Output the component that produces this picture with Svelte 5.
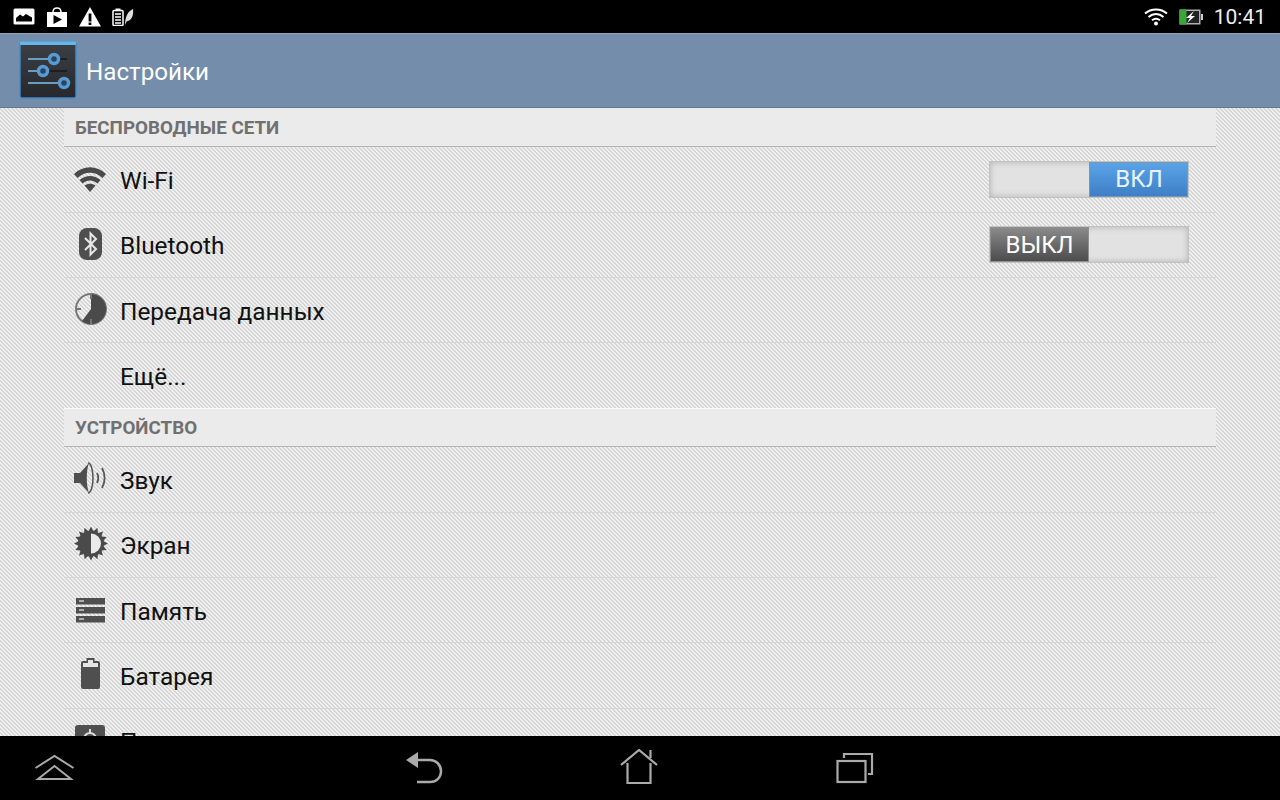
<script>
  const wireless = [
    { id: 'wifi', label: 'Wi-Fi', toggle: 'on' },
    { id: 'bt', label: 'Bluetooth', toggle: 'off' },
    { id: 'data', label: 'Передача данных' },
    { id: '', label: 'Ещё...' }
  ];
  const device = [
    { id: 'sound', label: 'Звук' },
    { id: 'screen', label: 'Экран' },
    { id: 'storage', label: 'Память' },
    { id: 'battery', label: 'Батарея' },
    { id: 'apps', label: 'Приложения' }
  ];
  const sunTeeth = Array.from({ length: 16 }, (_, i) => i * 22.5);
</script>

{#snippet rowIcon(id)}
  <svg class="row-icon" viewBox="0 0 36 36" aria-hidden="true">
    {#if id === 'wifi'}
      <g transform="translate(0 2)" fill="#4a4a4a">
        <path d="M2 11 C11 2 25 2 34 11 L30.5 15 C23 8 13 8 5.5 15Z"/>
        <path d="M7.5 17 C14 11.5 22 11.5 28.5 17 L25.5 20.5 C20.5 16.5 15.5 16.5 10.5 20.5Z"/>
        <path d="M12.5 22.5 C16 20 20 20 23.5 22.5 L18 29Z"/>
      </g>
    {:else if id === 'bt'}
      <rect x="7" y="1" width="23" height="32" rx="8" fill="#4f4f4f"/>
      <path d="M13 11 L24 22 L18.5 27.5 V6.5 L24 12 L13 23" fill="none" stroke="#e8e8e8" stroke-width="2"/>
    {:else if id === 'data'}
      <g transform="translate(1 -1)">
        <circle cx="18" cy="18" r="15" fill="none" stroke="#777" stroke-width="2"/>
        <path d="M18 3 A15 15 0 1 1 9 30 L18 18Z" fill="#4a4a4a"/>
        <path d="M18 28 V33 M3 18 H8 M18 3 V8" stroke="#777" stroke-width="2"/>
      </g>
    {:else if id === 'sound'}
      <g transform="translate(0 -1)">
        <path d="M2 13 H8 L17 3 C14 10 14 26 17 33 L8 23 H2Z" fill="#4f4f4f"/>
        <path d="M16 3 C19 3 21 10 21 18 C21 26 19 33 16 33" fill="none" stroke="#555" stroke-width="1.5"/>
        <path d="M25 13 C26.5 16 26.5 20 25 23 M30 8 C33.5 14 33.5 22 30 28" fill="none" stroke="#555" stroke-width="1.8"/>
      </g>
    {:else if id === 'screen'}
      <g transform="translate(1 -1.5)">
        {#each sunTeeth as a}
          <path d="M15.5 6 L18 1 L20.5 6Z" fill="#4a4a4a" transform="rotate({a} 18 18)"/>
        {/each}
        <circle cx="18" cy="18" r="13" fill="#4a4a4a"/>
        <path d="M18 8 A10 10 0 0 1 18 28Z" fill="#eaeaea"/>
      </g>
    {:else if id === 'storage'}
      <rect x="4" y="6" width="29" height="6.5" fill="#4f4f4f"/>
      <rect x="4" y="15" width="29" height="6.5" fill="#4f4f4f"/>
      <rect x="4" y="24" width="29" height="6.5" fill="#4f4f4f"/>
      <path d="M7 9 H12 M7 18 H12 M7 27 H12" stroke="#ccc" stroke-width="1.6"/>
    {:else if id === 'battery'}
      <path d="M9 6 Q9 4 11 4 H14.5 V1 H22.5 V4 H26 Q28 4 28 6 V30 Q28 32 26 32 H11 Q9 32 9 30Z" fill="#4f4f4f"/>
      <path d="M11 6 H16 V3 H21 V6 H26 V10 H11Z" fill="#e4e4e4"/>
    {:else if id === 'apps'}
      <rect x="3" y="2" width="30" height="32" rx="3" fill="#4f4f4f"/>
      <circle cx="18" cy="16" r="6" fill="none" stroke="#ddd" stroke-width="2"/>
      <path d="M18 6 V10 M18 22 V26 M8 16 H12 M24 16 H28" stroke="#ddd" stroke-width="2"/>
    {/if}
  </svg>
{/snippet}

{#snippet row(item)}
  <div class="row">
    <div class="icon-slot">
      {#if item.id}{@render rowIcon(item.id)}{/if}
    </div>
    <span class="label">{item.label}</span>
    {#if item.toggle === 'on'}
      <div class="switch"><span class="blank"></span><span class="thumb on">ВКЛ</span></div>
    {:else if item.toggle === 'off'}
      <div class="switch"><span class="thumb off">ВЫКЛ</span><span class="blank"></span></div>
    {/if}
  </div>
{/snippet}

<div class="screen">
  <header class="status">
    <div class="status-left">
      <svg width="22" height="17" viewBox="0 0 22 17"><rect x="0.5" y="0.5" width="21" height="16" rx="1.5" fill="#fff"/><path d="M3 13.5 V10 L7 6.5 L10 8.5 L13 6 L19 9.5 V13.5Z" fill="#000"/></svg>
      <svg width="22" height="22" viewBox="0 0 22 22"><path d="M1 6 H21 V21 H1Z" fill="#fff"/><path d="M7 6 C7 0.5 15 0.5 15 6" fill="none" stroke="#fff" stroke-width="1.5"/><path d="M7.5 9 L16 13.5 L7.5 18Z" fill="#000"/></svg>
      <svg width="22" height="20" viewBox="0 0 22 20"><path d="M11 0 L22 19.5 H0Z" fill="#fff"/><rect x="9.6" y="6.5" width="2.8" height="8" fill="#000"/><rect x="9.6" y="15.5" width="2.8" height="2.5" fill="#000"/></svg>
      <svg width="22" height="18" viewBox="0 0 22 18"><rect x="1" y="2.5" width="10" height="15" rx="1" fill="none" stroke="#fff" stroke-width="1.5"/><rect x="3.5" y="0.5" width="5" height="2" fill="#fff"/><path d="M3 6 H9 M3 9 H9 M3 12 H9 M3 15 H9" stroke="#fff" stroke-width="1.5"/><path d="M13 17 C13 9 16 3 21 1 C22 8 19 13 14.5 13.5Z" fill="#ddd"/></svg>
    </div>
    <div class="status-right">
      <svg width="24" height="19" viewBox="0 0 24 19"><g fill="none" stroke="#fff" stroke-width="2"><path d="M1 6.5 C7 1 17 1 23 6.5"/><path d="M4.5 10 C9 6 15 6 19.5 10"/><path d="M8 13.2 C10.5 11.3 13.5 11.3 16 13.2"/></g><circle cx="12" cy="16.5" r="2" fill="#fff"/></svg>
      <svg class="batt" width="24" height="16" viewBox="0 0 24 16"><rect x="0.5" y="0.5" width="21" height="15" fill="#b0b0b0"/><rect x="2" y="2" width="18" height="12" fill="#222"/><rect x="0.5" y="0.5" width="7" height="15" fill="#3aa63a"/><rect x="22" y="5" width="2" height="6" fill="#ccc"/><path d="M15 2 L7 9 H11 L8 14 L16 7 H12Z" fill="#fff"/></svg>
      <span class="clock">10:41</span>
    </div>
  </header>

  <div class="actionbar">
    <svg class="app-icon" width="58" height="58" viewBox="0 0 58 58">
      <defs>
        <linearGradient id="appbg" x1="0" y1="0" x2="0" y2="1">
          <stop offset="0" stop-color="#3c4045"/>
          <stop offset="1" stop-color="#26282b"/>
        </linearGradient>
      </defs>
      <rect x="1" y="1" width="56" height="56" rx="2" fill="url(#appbg)" stroke="#3f8ccb" stroke-width="1.5"/>
      <rect x="1" y="0.5" width="56" height="3.5" rx="1" fill="#62b8ee"/>
      <path d="M9 18 H35 M9 30 H24 M9 42 H45" stroke="#6d9cc2" stroke-width="2"/>
      <path d="M38 18 H48 M28 30 H48" stroke="#16181a" stroke-width="1.5"/>
      <circle cx="35" cy="18" r="4.5" fill="#27455f" stroke="#5a9ad2" stroke-width="3.5"/>
      <circle cx="24" cy="30" r="4.5" fill="#27455f" stroke="#5a9ad2" stroke-width="3.5"/>
      <circle cx="45" cy="42" r="4.5" fill="#27455f" stroke="#5a9ad2" stroke-width="3.5"/>
    </svg>
    <span class="title">Настройки</span>
  </div>

  <main class="content">
    <div class="list">
      <div class="section-title">БЕСПРОВОДНЫЕ СЕТИ</div>
      {#each wireless as item}
        {@render row(item)}
      {/each}
      <div class="section-title second">УСТРОЙСТВО</div>
      {#each device as item}
        {@render row(item)}
      {/each}
    </div>
  </main>

  <footer class="nav">
    <svg class="nav-up" width="42" height="28" viewBox="0 0 42 28"><g fill="none" stroke="#aaa" stroke-width="2"><path d="M1.5 14 L20.5 2 L39.5 14"/><path d="M4 25 L20.5 12 L37 25Z"/></g></svg>
    <svg class="nav-back" width="38" height="34" viewBox="0 0 38 34"><path d="M1 9 L13 1 V17Z" fill="#aaa"/><path d="M12 9 H25 C31 9 36 14 36 20 C36 27 31 31 25 31 H12" fill="none" stroke="#aaa" stroke-width="2.5"/></svg>
    <svg class="nav-home" width="38" height="36" viewBox="0 0 38 36"><g fill="none" stroke="#aaa" stroke-width="2.2"><path d="M1 16 L19 1 L37 16"/><path d="M7.5 14 V34 H30.5 V14"/><path d="M30.5 9 V1"/></g></svg>
    <svg class="nav-recent" width="38" height="32" viewBox="0 0 38 32"><g fill="none" stroke="#aaa" stroke-width="2.2"><rect x="1.5" y="9" width="28" height="21"/><path d="M8 6 V2 H36 V22 H32"/></g></svg>
  </footer>
</div>

<style>
  :global(body) { margin: 0; background: #000; }
  .screen { width: 1280px; height: 800px; display: flex; flex-direction: column; overflow: hidden; font-family: Roboto, "Liberation Sans", sans-serif; }

  .status { height: 33px; flex: none; background: #000; display: flex; align-items: center; justify-content: space-between; padding: 0 14px 0 13px; color: #fff; }
  .status-left { display: flex; align-items: center; gap: 11px; }
  .status-right { display: flex; align-items: center; gap: 11px; }
  .clock { font-size: 21px; color: #eee; }

  .actionbar { height: 75px; flex: none; box-sizing: border-box; background: #748daa; border-top: 1px solid #8ea5bb; border-bottom: 1px solid #66798c; display: flex; align-items: center; padding-left: 19px; gap: 9px; }
  .app-icon { margin-top: -1px; }
  .title { color: #fff; font-size: 24.2px; padding-top: 2px; }

  .content { flex: 1; min-height: 0; overflow: hidden; padding: 0 64px; background-color: #ebebeb; background-image: linear-gradient(45deg, #f0f0f0 25%, #d6d6d6 25%, #d6d6d6 50%, #f0f0f0 50%, #f0f0f0 75%, #d6d6d6 75%); background-size: 4px 4px; }
  .list { display: flex; flex-direction: column; }

  .section-title { height: 39.34px; flex: none; box-sizing: border-box; padding: 8px 0 0 11px; background: #ebebeb; border-bottom: 1px solid #b4b4b4; color: #707070; font-size: 18.8px; font-weight: 700; line-height: 24px; }
  .section-title.second { height: 38.63px; padding-top: 7px; }

  .row { height: 65.33px; flex: none; box-sizing: border-box; border-bottom: 1px solid #d6d6d6; display: flex; align-items: center; padding-right: 27px; }
  .row:has(+ .second) { border-bottom-color: #fafafa; }
  .icon-slot { width: 56px; flex: none; display: flex; padding-left: 8px; box-sizing: border-box; }
  .row-icon { width: 36px; height: 36px; display: block; }
  .label { flex: 1; font-size: 24.4px; color: #111; padding-top: 2px; }

  .switch { width: 200px; height: 37px; box-sizing: border-box; display: flex; background: #e2e2e2; border: 1px solid #c2c2c2; box-shadow: inset 0 0 6px #b0b0b0; }
  .blank { flex: 1; }
  .thumb { width: 99px; display: flex; align-items: center; justify-content: center; font-size: 24px; color: #fff; box-sizing: border-box; }
  .thumb.on { background: linear-gradient(#5aa3e6, #3f7fc6); border: 1px solid #7c98ae; color: #e8f4ff; padding-left: 1px; }
  .thumb.off { background: linear-gradient(#8a8a8a, #4c4c4c); border: 1px solid #8f8f8f; }

  .nav { height: 64px; flex: none; background: #000; position: relative; }
  .nav svg { position: absolute; }
  .nav-up { left: 34px; top: 18px; }
  .nav-back { left: 405px; top: 15px; }
  .nav-home { left: 620px; top: 13px; }
  .nav-recent { left: 836px; top: 16px; }
</style>
